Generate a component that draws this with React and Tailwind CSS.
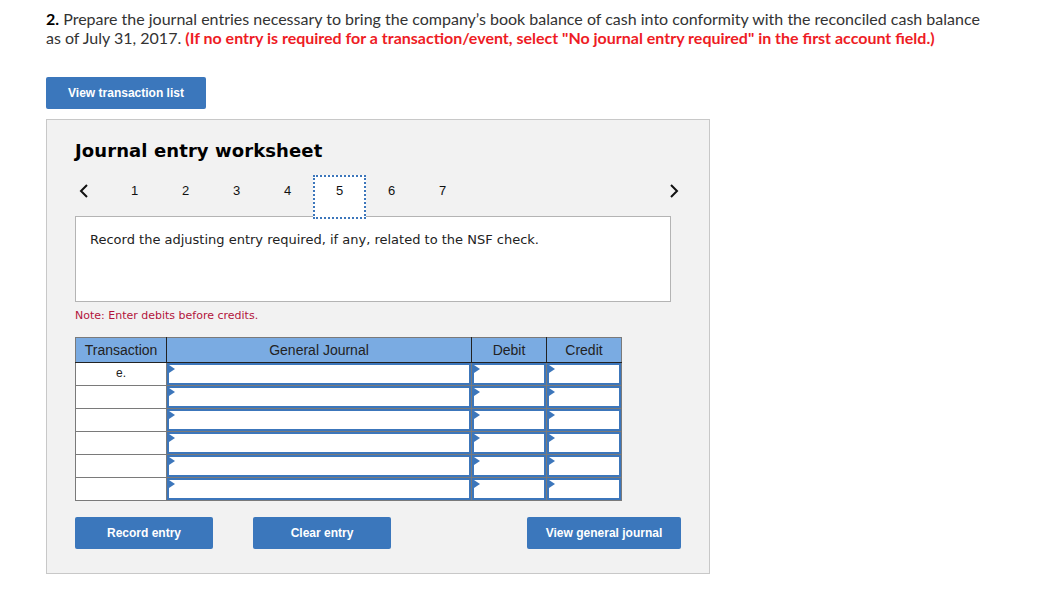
import React from "react";

const Tri = () => (
  <svg className="absolute left-0 top-0" width="6" height="8" viewBox="0 0 6 8">
    <path d="M0 0 L6 4 L0 8 Z" fill="#3c76bb" />
  </svg>
);

function InputCell({ w }) {
  return (
    <td className={`border border-[#7a7a7a] p-0 h-[22px] ${w}`}>
      <div className="relative h-[22px] border-2 border-[#3c76bb] bg-white">
        <Tri />
      </div>
    </td>
  );
}

export default function App() {
  const rows = ["e.", "", "", "", "", ""];
  const nums = [1, 2, 3, 4, 5, 6, 7];
  return (
    <div className="w-[1063px] h-[594px] bg-white pl-[46px] pt-[9px]" style={{ fontFamily: "Lato, 'Open Sans', sans-serif" }}>
      <p className="text-[16px] leading-[19px] text-[#333] whitespace-nowrap">
        <b className="font-bold text-black">2.</b> Prepare the journal entries necessary to bring the company’s book balance of cash into conformity with the reconciled cash balance
        <br />
        as of July 31, 2017.{" "}
        <span className="font-bold text-[#ee1c25]">(If no entry is required for a transaction/event, select "No journal entry required" in the first account field.)</span>
      </p>

      <button className="mt-[30px] w-[160px] h-[32px] rounded-[2px] bg-[#3b77bc] text-white text-[12px] font-bold" style={{ fontFamily: "'Liberation Sans', Arial, sans-serif" }}>
        View transaction list
      </button>

      <div className="mt-[10px] w-[664px] h-[455px] bg-[#f2f2f2] border border-[#c8c8c8] pl-[28px] pt-[19px]">
        <h2 className="text-[18px] font-bold text-black leading-[24px] tracking-[0.1px]" style={{ fontFamily: "'DejaVu Sans', Verdana, sans-serif" }}>
          Journal entry worksheet
        </h2>

        <div className="mt-[12px] flex items-start h-[44px] w-[600px] relative" style={{ fontFamily: "'Liberation Sans', Arial, sans-serif" }}>
          <svg className="absolute left-[4px] top-[9px]" width="10" height="14" viewBox="0 0 10 14">
            <path d="M8 1 L2 7 L8 13" stroke="#111" strokeWidth="2" fill="none" />
          </svg>
          <div className="flex ml-[34px]">
            {nums.map((n) =>
              n === 5 ? (
                <div
                  key={n}
                  className="w-[53px] h-[44px] flex justify-center pt-[6px] text-[13px] leading-[15px] text-[#111] bg-white border-[2px] border-dotted border-[#3c76bb]"
                >
                  {n}
                </div>
              ) : (
                <div key={n} className="w-[51px] h-[44px] flex justify-center pt-[8px] text-[13px] leading-[15px] text-[#111]">
                  {n}
                </div>
              )
            )}
          </div>
          <svg className="absolute left-[594px] top-[9px]" width="10" height="14" viewBox="0 0 10 14">
            <path d="M2 1 L8 7 L2 13" stroke="#111" strokeWidth="2" fill="none" />
          </svg>
        </div>

        <div className="w-[596px] h-[86px] bg-white border border-[#b4b4b4] -mt-[3px] pl-[14px] pt-[13px] text-[13px] text-[#222]" style={{ fontFamily: "'DejaVu Sans', Verdana, sans-serif" }}>
          Record the adjusting entry required, if any, related to the NSF check.
        </div>

        <p className="mt-[6px] text-[11px] leading-[16px] text-[#b3143c]" style={{ fontFamily: "'DejaVu Sans', Verdana, sans-serif" }}>
          Note: Enter debits before credits.
        </p>

        <table className="mt-[13px] border-collapse border border-[#7a7a7a]" style={{ fontFamily: "'Liberation Sans', Arial, sans-serif" }}>
          <thead>
            <tr className="bg-[#7aabe2] h-[25px] text-[14px] text-[#222]">
              <th className="w-[91px] p-0 font-normal border border-[#222] border-t-[#7a7a7a] border-l-[#7a7a7a]">Transaction</th>
              <th className="w-[305px] p-0 font-normal border border-[#222] border-t-[#7a7a7a]">General Journal</th>
              <th className="w-[75px] p-0 font-normal border border-[#222] border-t-[#7a7a7a]">Debit</th>
              <th className="w-[75px] p-0 font-normal border border-[#222] border-t-[#7a7a7a] border-r-[#7a7a7a]">Credit</th>
            </tr>
          </thead>
          <tbody>
            {rows.map((r, i) => (
              <tr key={i}>
                <td className="border border-[#7a7a7a] bg-white h-[22px] p-0 text-center align-top pt-[3px] text-[12px] text-[#222] leading-[14px]">{r}</td>
                <InputCell w="w-[305px]" />
                <InputCell w="w-[75px]" />
                <InputCell w="w-[75px]" />
              </tr>
            ))}
          </tbody>
        </table>

        <div className="mt-[16px] flex w-[606px]" style={{ fontFamily: "'Liberation Sans', Arial, sans-serif" }}>
          <button className="w-[138px] h-[32px] rounded-[2px] bg-[#3b77bc] text-white text-[12px] font-bold">Record entry</button>
          <button className="ml-[40px] w-[138px] h-[32px] rounded-[2px] bg-[#3b77bc] text-white text-[12px] font-bold">Clear entry</button>
          <button className="ml-auto w-[154px] h-[32px] rounded-[2px] bg-[#3b77bc] text-white text-[12px] font-bold">View general journal</button>
        </div>
      </div>
    </div>
  );
}
